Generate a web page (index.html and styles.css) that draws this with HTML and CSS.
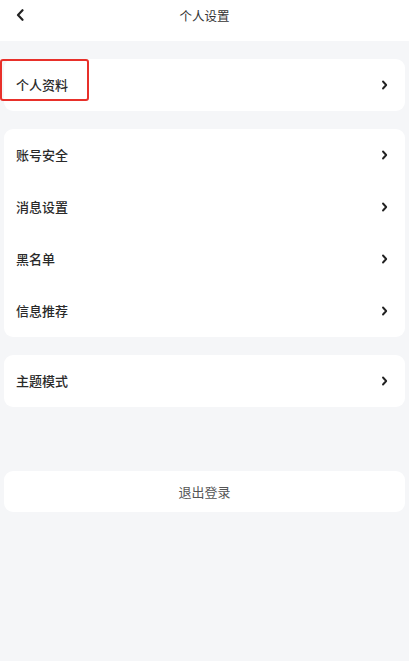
FILE: index.html
```html
<!DOCTYPE html>
<html lang="zh-CN">
<head>
<meta charset="utf-8">
<title>个人设置</title>
<link rel="stylesheet" href="styles.css">
</head>
<body>
<div class="page">
  <header class="topbar">
    <span class="back">
      <svg width="8" height="12" viewBox="0 0 8 12"><path d="M6.5 1.2 L2 6 L6.5 10.8" fill="none" stroke="#222" stroke-width="2.2" stroke-linecap="round" stroke-linejoin="round"/></svg>
    </span>
    <h1 class="title">个人设置</h1>
  </header>

  <main class="content">
    <section class="card">
      <div class="row">
        <span class="label">个人资料</span>
        <svg class="chev" width="7" height="10" viewBox="0 0 7 10"><path d="M2 1.5 L5.2 5 L2 8.5" fill="none" stroke="#222" stroke-width="1.9" stroke-linecap="round" stroke-linejoin="round"/></svg>
      </div>
      <span class="highlight"></span>
    </section>

    <section class="card">
      <div class="row">
        <span class="label">账号安全</span>
        <svg class="chev" width="7" height="10" viewBox="0 0 7 10"><path d="M2 1.5 L5.2 5 L2 8.5" fill="none" stroke="#222" stroke-width="1.9" stroke-linecap="round" stroke-linejoin="round"/></svg>
      </div>
      <div class="row">
        <span class="label">消息设置</span>
        <svg class="chev" width="7" height="10" viewBox="0 0 7 10"><path d="M2 1.5 L5.2 5 L2 8.5" fill="none" stroke="#222" stroke-width="1.9" stroke-linecap="round" stroke-linejoin="round"/></svg>
      </div>
      <div class="row">
        <span class="label">黑名单</span>
        <svg class="chev" width="7" height="10" viewBox="0 0 7 10"><path d="M2 1.5 L5.2 5 L2 8.5" fill="none" stroke="#222" stroke-width="1.9" stroke-linecap="round" stroke-linejoin="round"/></svg>
      </div>
      <div class="row">
        <span class="label">信息推荐</span>
        <svg class="chev" width="7" height="10" viewBox="0 0 7 10"><path d="M2 1.5 L5.2 5 L2 8.5" fill="none" stroke="#222" stroke-width="1.9" stroke-linecap="round" stroke-linejoin="round"/></svg>
      </div>
    </section>

    <section class="card">
      <div class="row">
        <span class="label">主题模式</span>
        <svg class="chev" width="7" height="10" viewBox="0 0 7 10"><path d="M2 1.5 L5.2 5 L2 8.5" fill="none" stroke="#222" stroke-width="1.9" stroke-linecap="round" stroke-linejoin="round"/></svg>
      </div>
    </section>

    <button class="logout" type="button">退出登录</button>
  </main>
</div>
</body>
</html>
```

FILE: styles.css
```css
* { box-sizing: border-box; }

html, body {
  margin: 0;
  padding: 0;
  background: #ffffff;
}

body {
  font-family: "Noto Sans CJK SC", "Noto Sans", sans-serif;
  color: #222;
}

.page {
  width: 409px;
  height: 661px;
  background: #f5f6f8;
  display: flex;
  flex-direction: column;
}

.topbar {
  height: 41px;
  background: #ffffff;
  display: flex;
  align-items: center;
  justify-content: center;
  position: relative;
}

.back {
  position: absolute;
  left: 16px;
  top: 9px;
  display: flex;
}

.title {
  margin: 0 0 11px 0;
  font-size: 12.5px;
  font-weight: 400;
  color: #333;
}

.content {
  padding: 18px 4px 0 4px;
  display: flex;
  flex-direction: column;
  gap: 18px;
}

.card {
  background: #ffffff;
  border-radius: 9px;
  position: relative;
}

.row {
  height: 52px;
  display: flex;
  align-items: center;
  justify-content: space-between;
  padding: 0 17px 1px 12px;
}

.label {
  font-size: 13px;
  font-weight: 500;
  color: #2a2a2a;
}

.chev {
  display: block;
}

.highlight {
  position: absolute;
  left: -4px;
  top: 0;
  width: 89px;
  height: 42px;
  border: 2px solid #e8302a;
  border-radius: 3px;
}

.logout {
  margin-top: 46px;
  height: 41px;
  border: none;
  background: #ffffff;
  border-radius: 9px;
  font-family: inherit;
  font-size: 13px;
  color: #555;
  padding: 0;
}
```
